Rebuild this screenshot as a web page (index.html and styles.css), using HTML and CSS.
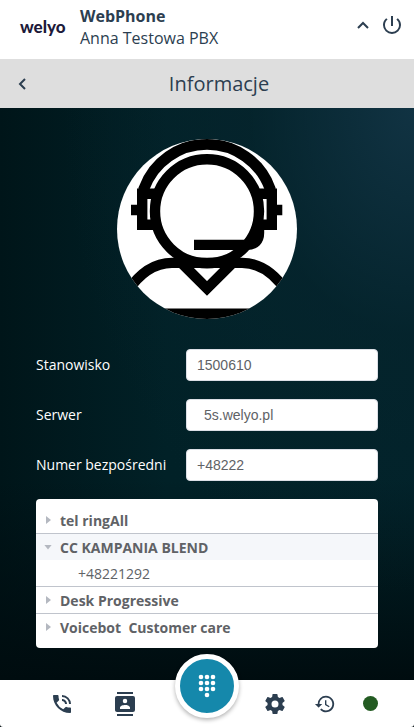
FILE: index.html
```html
<!DOCTYPE html>
<html lang="pl">
<head>
<meta charset="utf-8">
<meta name="viewport" content="width=device-width, initial-scale=1">
<title>WebPhone</title>
<link rel="stylesheet" href="styles.css">
</head>
<body>
<div class="app">
  <header class="topbar">
    <a class="logo" href="#">welyo</a>
    <div class="account">
      <strong class="account-app">WebPhone</strong>
      <span class="account-name">Anna Testowa PBX</span>
    </div>
    <button class="icon-button" type="button" aria-label="Zwiń">
      <svg width="24" height="24" viewBox="0 0 24 24"><path d="M6 13l5-5 5 5" fill="none" stroke="currentColor" stroke-width="2"/></svg>
    </button>
    <button class="icon-button" type="button" aria-label="Wyloguj">
      <svg width="24" height="24" viewBox="0 0 24 24"><path d="M13 1h-2v10h2V1zm4.830 2.170l-1.420 1.420A6.920 6.920 0 0 1 19 10c0 3.870-3.130 7-7 7s-7-3.130-7-7c0-2.190 1.010-4.140 2.580-5.420L6.170 3.170A8.930 8.930 0 0 0 3 10a9 9 0 0 0 18 0c0-2.740-1.230-5.180-3.170-6.830z" fill="currentColor"/></svg>
    </button>
  </header>

  <div class="titlebar">
    <button class="icon-button" type="button" aria-label="Wstecz">
      <svg width="24" height="24" viewBox="0 0 24 24"><path d="M15 7l-5 5 5 5" fill="none" stroke="currentColor" stroke-width="2"/></svg>
    </button>
    <h1 class="title">Informacje</h1>
  </div>

  <main class="content">
    <svg class="avatar" width="180" height="180" viewBox="0 0 180 180" role="img" aria-label="Awatar">
      <rect width="180" height="180" fill="#fff"/>
      <g fill="none" stroke="#000" stroke-width="10.4">
        <circle cx="90" cy="72.3" r="52"/>
        <path d="M27 50.500V49.500A67 67 0 0 1 153 49.500V50.500" stroke-width="11"/>
        <path d="M42 54.700H25.200V85.800H42M138 54.700H154.800V85.800H138"/>
        <path d="M14 71H22M158 71H165.300"/>
        <path d="M77 105.900H130C138 105.900 142 101 142 94V84"/>
        <path d="M10 153C22 135 36 123.900 55 123.900H125C144 123.900 158 135 170 153"/>
        <path d="M62 121.500L90 149.500L118 121.500"/>
      </g>
      <rect y="169.500" width="180" height="11" fill="#000"/>
    </svg>

    <form class="fields">
      <label for="station">Stanowisko</label>
      <input id="station" type="text" value="1500610" readonly>
      <label for="server">Serwer</label>
      <input id="server" class="indented" type="text" value="5s.welyo.pl" readonly>
      <label for="direct">Numer bezpośredni</label>
      <input id="direct" type="text" value="+48222" readonly>
    </form>

    <section class="queues">
      <details><summary>tel ringAll</summary></details>
      <details open><summary>CC KAMPANIA BLEND</summary><p class="number">+48221292</p></details>
      <details><summary>Desk Progressive</summary></details>
      <details><summary>Voicebot&nbsp; Customer care</summary></details>
    </section>
  </main>

  <nav class="bottombar">
    <div class="tools tools-left">
      <button class="icon-button" type="button" aria-label="Połączenia">
        <svg width="24" height="24" viewBox="0 0 24 24" fill="currentColor"><path d="M20 15.500c-1.250 0-2.450-.2-3.570-.57a1 1 0 0 0-1.020.24l-2.200 2.200a15.100 15.100 0 0 1-6.590-6.580l2.200-2.210c.28-.27.36-.66.250-1.010A11.400 11.400 0 0 1 8.500 4c0-.55-.45-1-1-1H4c-.55 0-1 .45-1 1 0 9.390 7.610 17 17 17 .55 0 1-.45 1-1v-3.500c0-.55-.45-1-1-1zM19 12h2a9 9 0 0 0-9-9v2c3.870 0 7 3.130 7 7zm-4 0h2c0-2.760-2.240-5-5-5v2c1.660 0 3 1.340 3 3z"/></svg>
      </button>
      <button class="icon-button" type="button" aria-label="Kontakty">
        <svg width="24" height="24" viewBox="0 0 24 24" fill="currentColor"><path d="M20 0H4v2h16V0zM4 24h16v-2H4v2zM20 4H4a2 2 0 0 0-2 2v12c0 1.100.9 2 2 2h16a2 2 0 0 0 2-2V6a2 2 0 0 0-2-2zm-8 2.750a2.250 2.250 0 1 1 0 4.500 2.250 2.250 0 0 1 0-4.500zM17 17H7v-1.500c0-1.670 3.330-2.500 5-2.500s5 .83 5 2.500V17z"/></svg>
      </button>
    </div>
    <button class="dial" type="button" aria-label="Klawiatura">
      <svg width="24" height="24" viewBox="0 0 24 24" fill="currentColor"><circle cx="6" cy="3" r="2.300"/><circle cx="12" cy="3" r="2.300"/><circle cx="18" cy="3" r="2.300"/><circle cx="6" cy="9" r="2.300"/><circle cx="12" cy="9" r="2.300"/><circle cx="18" cy="9" r="2.300"/><circle cx="6" cy="15" r="2.300"/><circle cx="12" cy="15" r="2.300"/><circle cx="18" cy="15" r="2.300"/><circle cx="12" cy="21" r="2.300"/></svg>
    </button>
    <div class="tools tools-right">
      <button class="icon-button" type="button" aria-label="Ustawienia">
        <svg width="24" height="24" viewBox="0 0 24 24" fill="currentColor"><path d="M19.430 12.980c.04-.32.070-.64.070-.98s-.03-.66-.07-.98l2.110-1.650c.19-.15.240-.42.120-.64l-2-3.460c-.12-.22-.39-.3-.61-.22l-2.490 1c-.52-.4-1.080-.73-1.690-.98l-.38-2.650A.49.49 0 0 0 14 2h-4c-.25 0-.46.180-.49.420l-.38 2.650c-.61.250-1.170.59-1.690.98l-2.490-1c-.23-.09-.49 0-.61.220l-2 3.460c-.13.220-.07.490.120.640l2.110 1.650c-.04.320-.07.650-.07.980s.03.660.070.980l-2.110 1.650c-.19.150-.24.420-.12.640l2 3.460c.12.220.39.300.61.220l2.490-1c.52.400 1.080.730 1.690.980l.38 2.650c.03.240.24.420.49.420h4c.25 0 .46-.18.49-.42l.38-2.650c.61-.25 1.170-.59 1.690-.98l2.490 1c.23.090.49 0 .61-.22l2-3.460c.12-.22.070-.49-.12-.64l-2.110-1.650zM12 15.500a3.500 3.500 0 1 1 0-7 3.500 3.500 0 0 1 0 7z"/></svg>
      </button>
      <button class="icon-button" type="button" aria-label="Historia">
        <svg width="22" height="22" viewBox="0 0 24 24" fill="currentColor"><path d="M13 3a9 9 0 0 0-9 9H1l3.890 3.890.070.140L9 12H6c0-3.870 3.130-7 7-7s7 3.130 7 7-3.130 7-7 7a6.990 6.990 0 0 1-4.940-2.060l-1.420 1.420A9 9 0 1 0 13 3zm-1 5v5l4.280 2.540.72-1.210-3.500-2.080V8H12z"/></svg>
      </button>
      <span class="status" role="img" aria-label="Dostępny"></span>
    </div>
  </nav>
</div>
</body>
</html>
```
FILE: styles.css
```css
* {
  box-sizing: border-box;
}

body {
  margin: 0;
  background: #000c0f;
  color: #2c3e50;
  font-family: "Open Sans", sans-serif;
  font-size: 14px;
}

.app {
  display: flex;
  flex-direction: column;
  min-height: 100vh;
}

button {
  padding: 0;
  border: 0;
  background: none;
  color: inherit;
  cursor: pointer;
}

svg {
  display: block;
}

.topbar {
  display: flex;
  align-items: center;
  gap: 4px;
  padding: 5px 10px 10px 20px;
  background: #fff;
}

.logo {
  width: 56px;
  color: #1d1a3a;
  font-family: Lato, sans-serif;
  font-size: 17px;
  font-weight: 900;
  line-height: 24px;
  text-decoration: none;
}

.account {
  display: flex;
  flex: 1;
  flex-direction: column;
  font-size: 16px;
  line-height: 22px;
}

.titlebar {
  display: grid;
  grid-template-columns: 24px 1fr;
  align-items: center;
  height: 49px;
  padding: 0 10px;
  background: #dedede;
}

.title {
  margin: 0;
  font-size: 20px;
  font-weight: 400;
  text-align: center;
}

.content {
  display: flex;
  flex: 1;
  flex-direction: column;
  padding: 31px 36px 32px;
  background:
    radial-gradient(ellipse at 100% 0, #113343 0, rgba(8, 38, 48, 0.5) 28%, rgba(1, 32, 38, 0) 60%),
    linear-gradient(to bottom, rgba(0, 12, 15, 0) 65%, #000c0f 100%),
    linear-gradient(to right, #001519 0, #012127 40%, #012229 100%);
}

.avatar {
  align-self: center;
  margin-bottom: 30px;
  border-radius: 50%;
}

.fields {
  display: grid;
  grid-template-columns: 150px 1fr;
  align-items: center;
  row-gap: 18px;
  margin-bottom: 18px;
  color: #fff;
}

.fields label {
  padding-bottom: 2px;
}

.fields input {
  width: 100%;
  height: 32px;
  padding: 0 10px;
  border: 1px solid #dcdfe6;
  border-radius: 4px;
  background: #fff;
  color: #606266;
  font-family: "Liberation Sans", sans-serif;
  font-size: 14px;
}

.fields .indented {
  padding-left: 17px;
}

.queues {
  padding: 8px 0;
  border-radius: 4px;
  background: #fff;
  color: #606266;
}

.queues details + details {
  border-top: 1px solid #c0c4cc;
}

.queues summary {
  display: flex;
  align-items: center;
  height: 26px;
  padding-left: 10px;
  font-weight: 700;
  list-style: none;
  cursor: pointer;
}

.queues summary::before {
  content: "";
  width: 5px;
  height: 8px;
  margin-right: 9px;
  background: #b4b8c0;
  clip-path: polygon(0 0, 100% 50%, 0 100%);
}

.queues details[open] summary {
  padding-left: 8px;
  background: #f5f7fa;
}

.queues details[open] summary::before {
  width: 8px;
  height: 5px;
  margin-right: 8px;
  clip-path: polygon(0 0, 100% 0, 50% 100%);
}

.number {
  margin: 0;
  padding: 2px 0 0 42px;
  line-height: 24px;
}

.bottombar {
  display: grid;
  grid-template-columns: 1fr 64px 1fr;
  align-items: center;
  height: 47px;
  border-radius: 0 0 3px 3px;
  background: #fff;
}

.tools {
  display: flex;
  align-items: center;
}

.tools-left {
  gap: 39px;
  padding-left: 50px;
}

.tools-right {
  gap: 27px;
  padding-left: 24px;
}

.dial {
  display: grid;
  place-items: center;
  width: 64px;
  height: 64px;
  margin-top: -36px;
  border: 5px solid #fff;
  border-radius: 50%;
  background: #1588ab;
  box-shadow: 0 2px 4px rgba(0, 0, 0, 0.3);
  color: #fff;
}

.status {
  width: 15px;
  height: 15px;
  border-radius: 50%;
  background: #235b22;
}
```
